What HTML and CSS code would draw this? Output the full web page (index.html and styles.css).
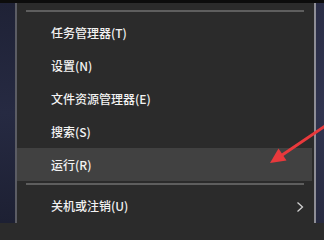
FILE: index.html
```html
<!DOCTYPE html>
<html lang="zh-CN">
<head>
<meta charset="utf-8">
<title>菜单</title>
<link rel="stylesheet" href="styles.css">
</head>
<body>
<div class="screen">
  <div class="topband"></div>
  <div class="main">
    <div class="side side-left"></div>
    <div class="vline vline-left"></div>
    <div class="menu">
      <div class="sep sep-top"></div>
      <div class="item">任务管理器(T)</div>
      <div class="item">设置(N)</div>
      <div class="item">文件资源管理器(E)</div>
      <div class="item">搜索(S)</div>
      <div class="item item-active">运行(R)</div>
      <div class="sep sep-bottom"></div>
      <div class="item item-sub">
        <span>关机或注销(U)</span>
        <svg class="chev" width="8" height="12" viewBox="0 0 8 12"><polyline points="1.5,1.5 6.5,6 1.5,10.5" fill="none" stroke="#d0d0d0" stroke-width="1.3"/></svg>
      </div>
    </div>
    <div class="vline vline-right"></div>
    <div class="side side-right"></div>
  </div>
  <svg class="arrow" width="324" height="223" viewBox="0 0 324 223">
    <line x1="328" y1="124" x2="280" y2="156.5" stroke="#e8393c" stroke-width="3" stroke-linecap="round"/>
    <polygon points="270,163 278.5,148.5 286.5,160.5" fill="#e8393c"/>
  </svg>
</div>
</body>
</html>
```
FILE: styles.css
```css
html, body {
  margin: 0;
  padding: 0;
  width: 324px;
  height: 223px;
  overflow: hidden;
  background: #2b2b2b;
}
.screen {
  position: relative;
  width: 324px;
  height: 223px;
  overflow: hidden;
  display: flex;
  flex-direction: column;
  font-family: "Noto Sans CJK SC", "Noto Sans", sans-serif;
}
.topband {
  height: 3px;
  background: #0c0c0c;
}
.main {
  flex: 1;
  display: flex;
}
.side-left {
  width: 15px;
  background: linear-gradient(180deg, #1f2236 0%, #262a42 50%, #1d2033 100%);
}
.side-right {
  width: 8px;
  background: linear-gradient(180deg, #2a2d46 0%, #30344f 50%, #272a40 100%);
}
.vline {
  width: 2px;
}
.vline-left {
  background: #5b5c64;
}
.vline-right {
  background: #8e8e96;
}
.menu {
  flex: 1;
  background: #2b2b2b;
  display: flex;
  flex-direction: column;
}
.sep {
  height: 2px;
  background: #5e5e5e;
  margin-left: 9px;
  margin-right: 10px;
}
.sep-top {
  margin-top: 7px;
  margin-bottom: 4px;
}
.sep-bottom {
  height: 2px;
  margin-top: 2px;
  margin-bottom: 4px;
}
.item {
  height: 33px;
  line-height: 33px;
  padding-left: 34px;
  font-size: 12px;
  font-weight: 500;
  color: #f2f2f2;
  white-space: nowrap;
}
.item-active {
  background: #414141;
  margin-right: 2px;
}
.item-sub {
  display: flex;
  align-items: center;
  justify-content: space-between;
  padding-right: 10px;
}
.chev {
  display: block;
  margin-top: 2px;
}
.arrow {
  position: absolute;
  left: 0;
  top: 0;
  pointer-events: none;
}
```
